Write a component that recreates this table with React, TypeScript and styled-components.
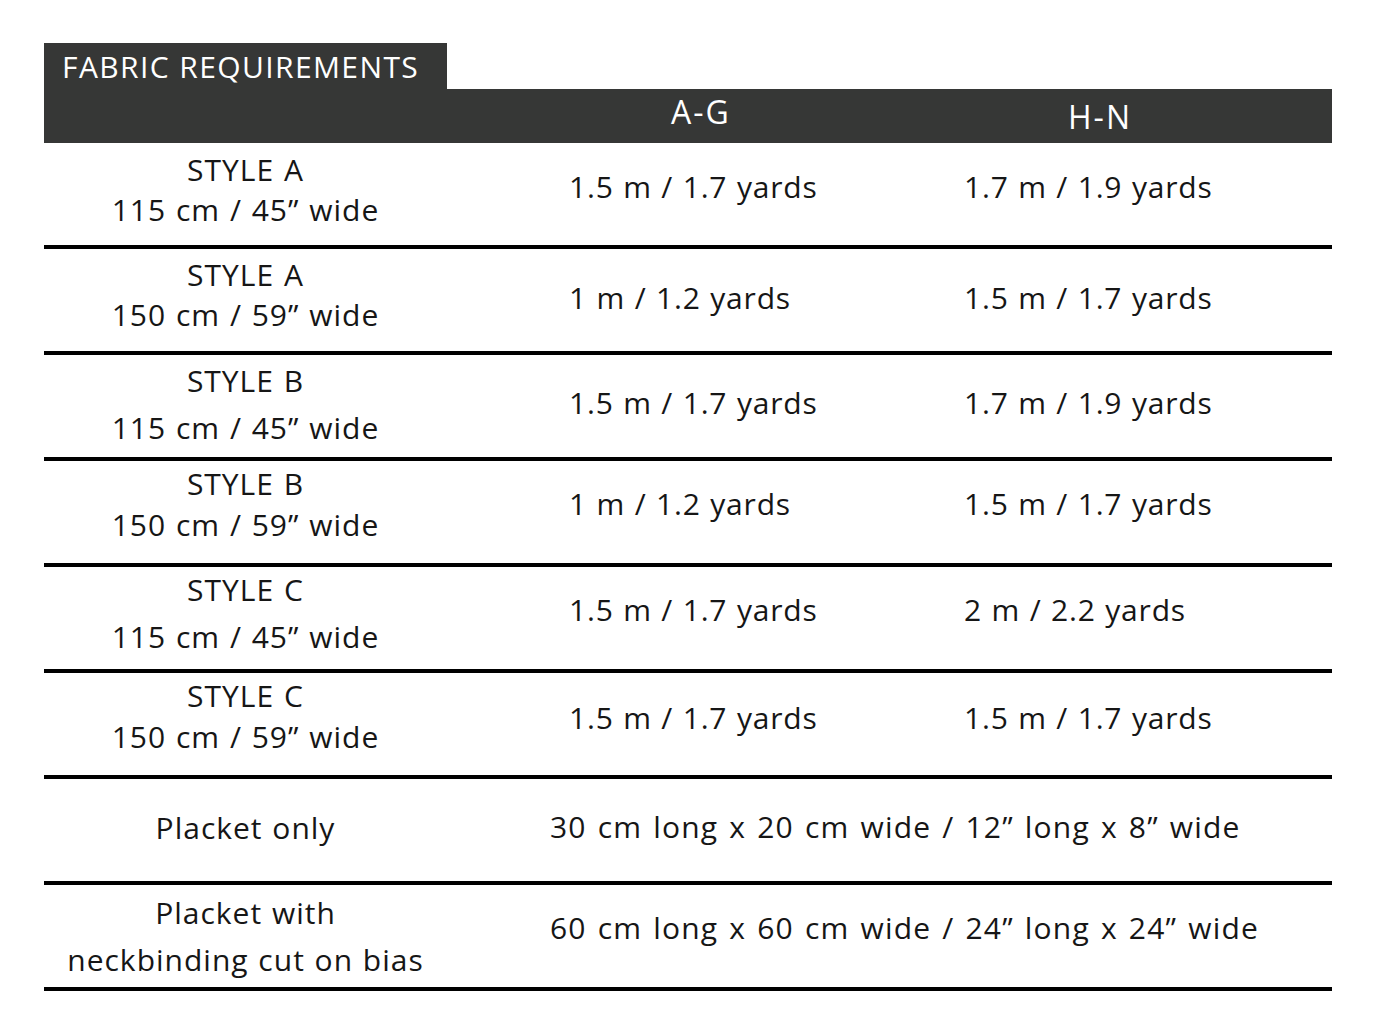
import styled, { createGlobalStyle } from "styled-components";

const GlobalStyle = createGlobalStyle`
  body {
    margin: 0;
    background: #ffffff;
    font-family: "Open Sans", "Noto Sans", sans-serif;
    color: #161616;
  }
`;

const COLS = "403px 395px 490px";

const Page = styled.div`
  padding: 43px 0 0 44px;
  width: 1288px;
`;

const Tab = styled.div`
  width: 403px;
  height: 46px;
  background: #363736;
  color: #ffffff;
  font-size: 30px;
  line-height: 48px;
  padding-left: 18px;
  box-sizing: border-box;
  letter-spacing: 1.4px;
  white-space: nowrap;
`;

const HeaderBar = styled.div`
  display: grid;
  grid-template-columns: ${COLS};
  height: 54px;
  background: #363736;
  color: #ffffff;
`;

const HeaderCell = styled.div<{ $left: number; $shift: number }>`
  grid-column: ${(p) => (p.$left > 500 ? 3 : 2)};
  font-size: 32px;
  letter-spacing: 2px;
  display: flex;
  align-items: center;
  padding-left: ${(p) => p.$left - (p.$left > 500 ? 395 : 0)}px;
  margin-top: ${(p) => p.$shift}px;
`;

const Row = styled.div`
  display: grid;
  grid-template-columns: ${COLS};
  height: 102px;
  border-bottom: 4px solid #000000;
`;

const Label = styled.div<{ $gap: number; $lift: number }>`
  display: flex;
  flex-direction: column;
  align-items: center;
  justify-content: center;
  gap: ${(p) => p.$gap}px;
  padding-bottom: ${(p) => p.$lift * 2}px;
  font-size: 30px;
  line-height: 34px;
  letter-spacing: 1px;
  word-spacing: 1px;
  text-align: center;
  white-space: nowrap;
`;

const Value = styled.div<{ $span?: boolean; $lift: number }>`
  grid-column: ${(p) => (p.$span ? "2 / span 2" : "auto")};
  display: flex;
  align-items: center;
  padding-left: ${(p) => (p.$span ? 103 : 122)}px;
  padding-bottom: ${(p) => p.$lift * 2}px;
  font-size: 30px;
  letter-spacing: ${(p) => (p.$span ? 1.2 : 0.8)}px;
  word-spacing: ${(p) => (p.$span ? 2 : 1)}px;
  white-space: nowrap;
`;

type Line = {
  label: string[];
  gap: number;
  labelLift: number;
  values: string[];
  lift: number;
};

const rows: Line[] = [
  { label: ["STYLE A", "115 cm / 45” wide"], gap: 6, labelLift: 4, values: ["1.5 m / 1.7 yards", "1.7 m / 1.9 yards"], lift: 8 },
  { label: ["STYLE A", "150 cm / 59” wide"], gap: 6, labelLift: 5, values: ["1 m / 1.2 yards", "1.5 m / 1.7 yards"], lift: 3 },
  { label: ["STYLE B", "115 cm / 45” wide"], gap: 13, labelLift: 2, values: ["1.5 m / 1.7 yards", "1.7 m / 1.9 yards"], lift: 4 },
  { label: ["STYLE B", "150 cm / 59” wide"], gap: 7, labelLift: 8, values: ["1 m / 1.2 yards", "1.5 m / 1.7 yards"], lift: 9 },
  { label: ["STYLE C", "115 cm / 45” wide"], gap: 13, labelLift: 5, values: ["1.5 m / 1.7 yards", "2 m / 2.2 yards"], lift: 9 },
  { label: ["STYLE C", "150 cm / 59” wide"], gap: 7, labelLift: 8, values: ["1.5 m / 1.7 yards", "1.5 m / 1.7 yards"], lift: 7 },
  { label: ["Placket only"], gap: 0, labelLift: 2, values: ["30 cm long x 20 cm wide / 12” long x 8” wide"], lift: 4 },
  { label: ["Placket with", "neckbinding cut on bias"], gap: 13, labelLift: 0, values: ["60 cm long x 60 cm wide / 24” long x 24” wide"], lift: 9 },
];

export default function App() {
  return (
    <Page>
      <GlobalStyle />
      <Tab>FABRIC REQUIREMENTS</Tab>
      <HeaderBar>
        <HeaderCell $left={224} $shift={-10}>A-G</HeaderCell>
        <HeaderCell $left={621} $shift={0}>H-N</HeaderCell>
      </HeaderBar>
      {rows.map((row, i) => (
        <Row key={i}>
          <Label $gap={row.gap} $lift={row.labelLift}>
            {row.label.map((l) => (
              <span key={l}>{l}</span>
            ))}
          </Label>
          {row.values.map((v, j) => (
            <Value key={j} $span={row.values.length === 1} $lift={row.lift}>
              {v}
            </Value>
          ))}
        </Row>
      ))}
    </Page>
  );
}
